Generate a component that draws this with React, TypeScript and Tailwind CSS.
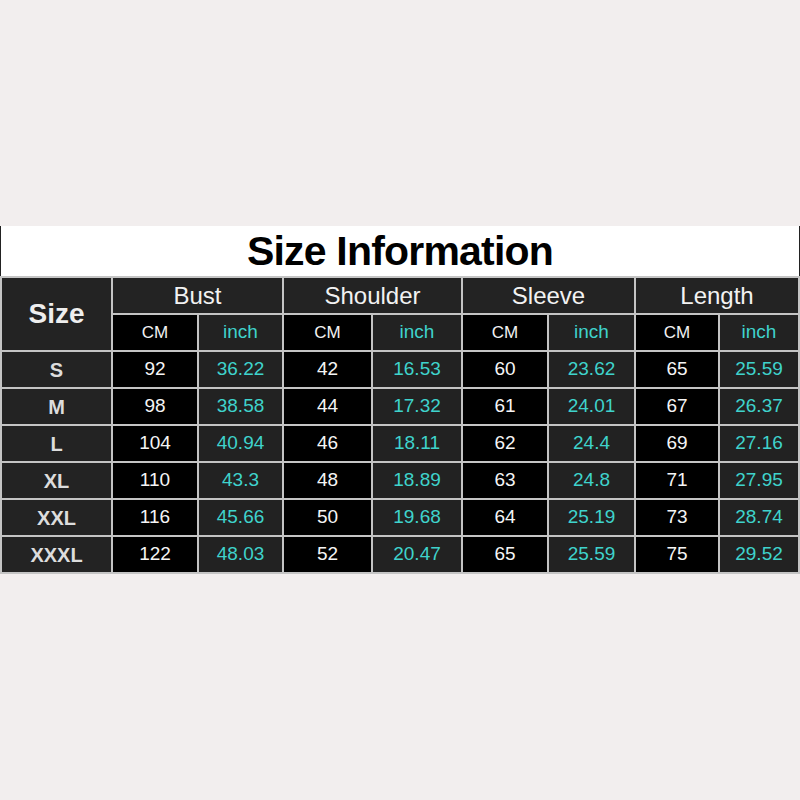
import React from "react";

const groups = ["Bust", "Shoulder", "Sleeve", "Length"];
const rows: [string, string[]][] = [
  ["S", ["92", "36.22", "42", "16.53", "60", "23.62", "65", "25.59"]],
  ["M", ["98", "38.58", "44", "17.32", "61", "24.01", "67", "26.37"]],
  ["L", ["104", "40.94", "46", "18.11", "62", "24.4", "69", "27.16"]],
  ["XL", ["110", "43.3", "48", "18.89", "63", "24.8", "71", "27.95"]],
  ["XXL", ["116", "45.66", "50", "19.68", "64", "25.19", "73", "28.74"]],
  ["XXXL", ["122", "48.03", "52", "20.47", "65", "25.59", "75", "29.52"]],
];

export default function App() {
  return (
    <div
      className="w-[800px] h-[800px] bg-[#f2eeee] pt-[226px]"
      style={{ fontFamily: '"Liberation Sans", Arial, sans-serif' }}
    >
      <div className="h-[50px] bg-white border-x border-[#222] flex items-center justify-center">
        <span className="text-[41px] font-bold tracking-[-0.8px] text-black leading-none">
          Size Information
        </span>
      </div>
      <div className="grid grid-cols-[109px_84px_83px_87px_88px_84px_85px_82px_78px] grid-rows-[repeat(8,35px)] gap-[2px] p-[2px] bg-[#c4c4c4]">
        <div className="row-span-2 bg-[#232323] flex items-center justify-center text-[28px] font-bold text-[#eeeeee]">
          Size
        </div>
        {groups.map((g) => (
          <div
            key={g}
            className="col-span-2 bg-[#232323] flex items-center justify-center text-[24px] text-[#f2f2f2]"
          >
            {g}
          </div>
        ))}
        {groups.map((g) => (
          <React.Fragment key={g + "sub"}>
            <div className="bg-black flex items-center justify-center text-[17px] text-[#f2f2f2]">
              CM
            </div>
            <div className="bg-[#222222] flex items-center justify-center text-[19px] text-[#3fd3cc]">
              inch
            </div>
          </React.Fragment>
        ))}
        {rows.map(([size, vals]) => (
          <React.Fragment key={size}>
            <div className="bg-[#232323] flex items-center justify-center text-[20px] font-bold text-[#dddddd]">
              {size}
            </div>
            {vals.map((v, i) =>
              i % 2 === 0 ? (
                <div
                  key={i}
                  className="bg-black flex items-center justify-center text-[19px] text-[#f5f5f5]"
                >
                  {v}
                </div>
              ) : (
                <div
                  key={i}
                  className="bg-[#222222] flex items-center justify-center text-[19px] text-[#3fd3cc]"
                >
                  {v}
                </div>
              )
            )}
          </React.Fragment>
        ))}
      </div>
    </div>
  );
}
